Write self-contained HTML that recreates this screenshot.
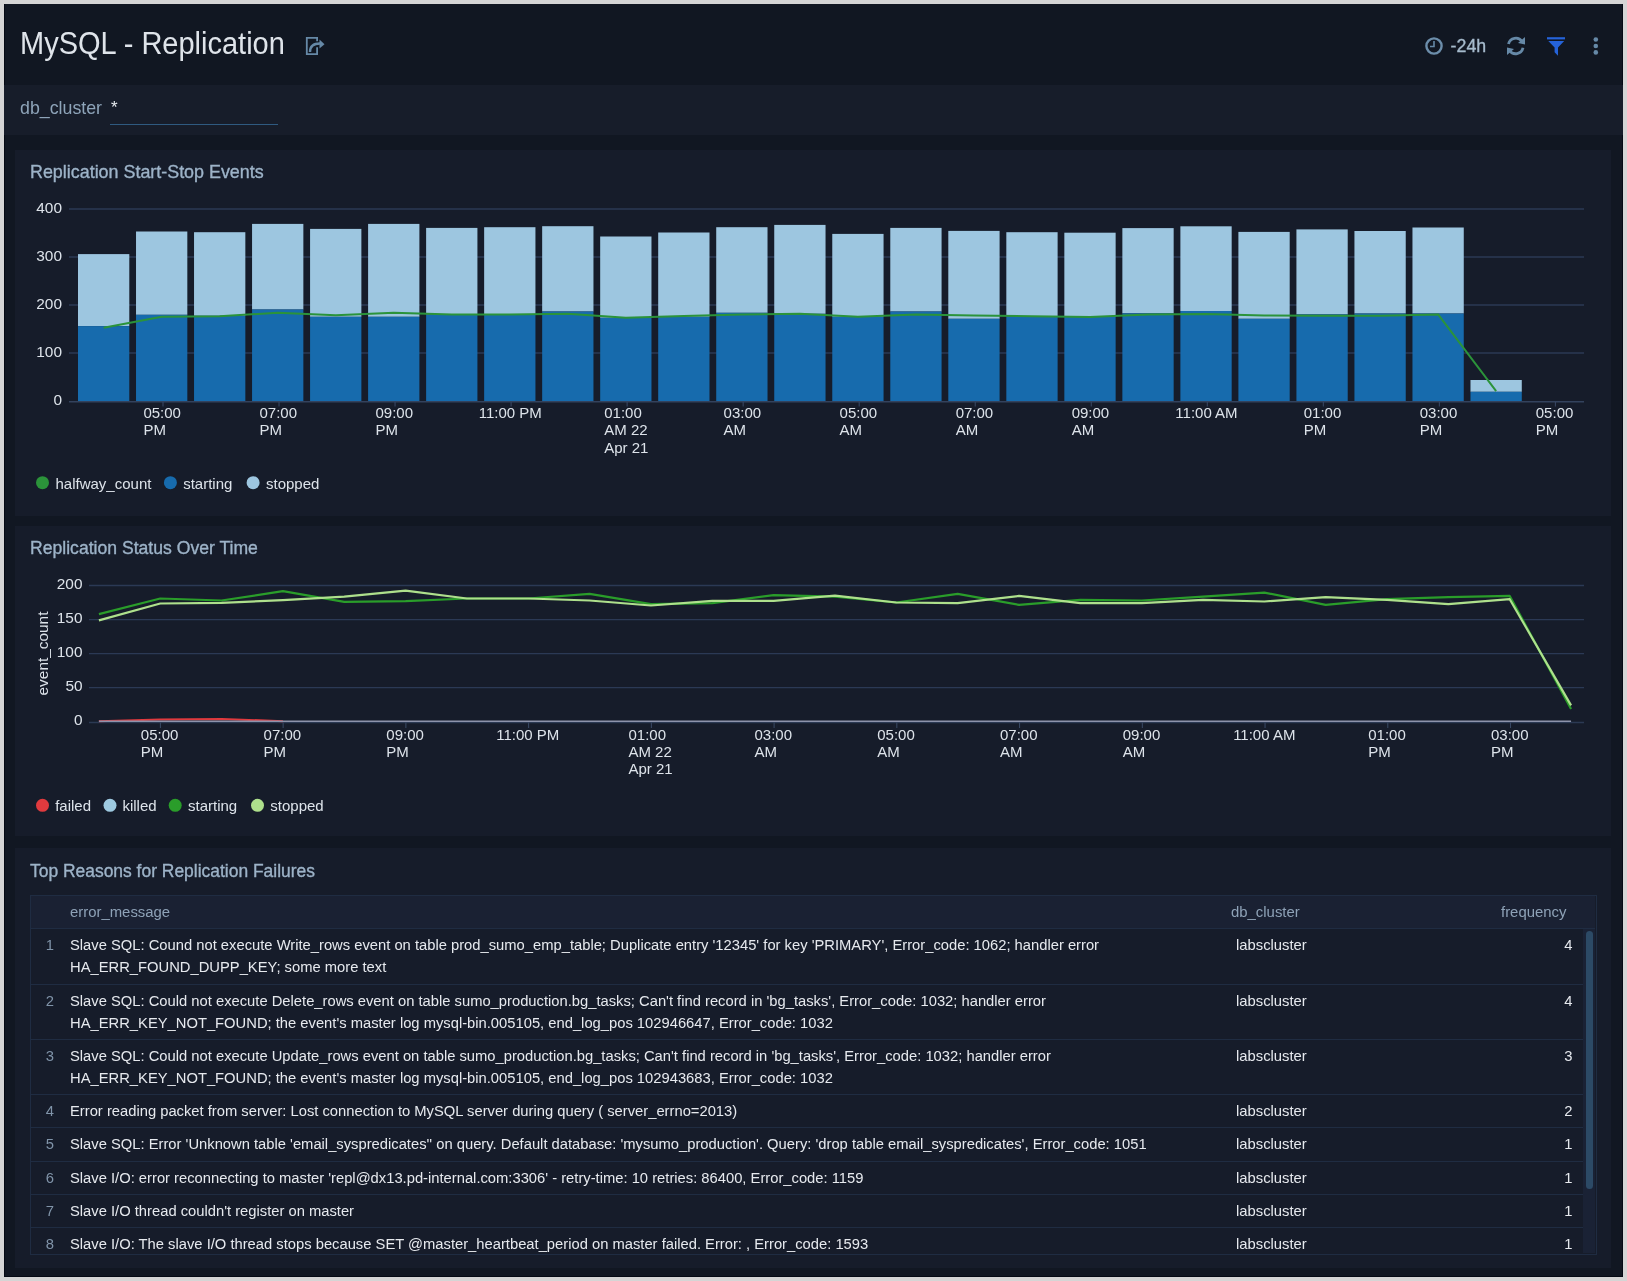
<!DOCTYPE html>
<html><head><meta charset="utf-8">
<style>
html,body{margin:0;padding:0;}
div,svg{will-change:transform;}
body{width:1627px;height:1281px;background:#d5d5d5;position:relative;overflow:hidden;font-family:"Liberation Sans", sans-serif;}
#frame{position:absolute;left:4px;top:4px;width:1619px;height:1273px;background:#111722;box-shadow:inset 1px -1px 0 #050a14, inset -1px 0 0 #050a14;}
.abs{position:absolute;}
#title{position:absolute;left:20px;top:24px;font-size:29px;color:#dfe4ea;white-space:nowrap;line-height:40px;transform:scaleY(1.07);transform-origin:0 30px;}
#filter{position:absolute;left:4px;top:85px;width:1619px;height:50px;background:#171d2a;}
.panel{position:absolute;left:15px;width:1596px;background:#161c2a;}
.ptitle{position:absolute;left:30px;font-size:17.9px;color:#9db3c8;white-space:nowrap;line-height:22px;-webkit-text-stroke:0.35px #9db3c8;}
svg text{font-family:"Liberation Sans", sans-serif;}
.ax{font-size:15px;fill:#dde3ea;}
.ay{font-size:15.4px;fill:#dde3ea;}
.lg{font-size:15px;fill:#dde3ea;}
#tbl{position:absolute;left:30px;top:895px;width:1565px;height:358px;border:1px solid #1f2c42;background:#161c2a;overflow:hidden;}
.row{position:absolute;left:30px;width:1553px;border-top:1px solid #1f2c42;box-sizing:border-box;}
.rn{position:absolute;left:30px;width:24px;text-align:right;font-size:14.8px;color:#8094a9;line-height:22px;}
.rt{position:absolute;left:70px;font-size:14.75px;color:#e6e9ee;line-height:22px;white-space:nowrap;}
.rc{position:absolute;left:1236px;font-size:14.8px;color:#e6e9ee;line-height:22px;}
.rf{position:absolute;left:1500px;width:72.5px;text-align:right;font-size:14.8px;color:#e6e9ee;line-height:22px;}
.th{position:absolute;top:901px;font-size:14.9px;color:#8ea2b7;line-height:22px;white-space:nowrap;}
</style></head><body>
<div id="frame"></div>
<div id="title">MySQL - Replication</div>
<svg class="abs" style="left:0;top:0" width="1627" height="140" viewBox="0 0 1627 140">
  <g fill="none" stroke="#6689a7" stroke-width="2">
    <path d="M317.1 41.2 V37.9 H306.8 V54.1 H317.1 V47.2" stroke-width="1.8"/>
    <path d="M310 52 C310 46 313 43.5 320 43.5" stroke-width="2.4"/>
  </g>
  <path d="M319.5 39.5 L324.5 44.3 L319.5 48.5 Z" fill="#6689a7"/>
  <circle cx="1434" cy="46" r="7.6" fill="none" stroke="#6c8eab" stroke-width="2.4"/>
  <path d="M1434 41 V46.5 H1430" fill="none" stroke="#6689a7" stroke-width="1.6"/>
  <text x="1450.6" y="52" style="font-size:17.8px" fill="#a6bbcd" stroke="#a6bbcd" stroke-width="0.35">-24h</text>
  <g fill="none" stroke="#6689a7" stroke-width="2.8">
    <path d="M1508.5 44 A7.5 7.5 0 0 1 1522 41.5"/>
    <path d="M1523 47.8 A7.5 7.5 0 0 1 1509.5 50.5"/>
  </g>
  <path d="M1525 37 L1525 44.5 L1518 43 Z" fill="#6689a7"/>
  <path d="M1507 55 L1507 47.5 L1514 49 Z" fill="#6689a7"/>
  <rect x="1547" y="37.2" width="18" height="2.2" fill="#2563d9"/>
  <path d="M1548.3 41 H1564.2 L1558 47.6 V55.8 L1554.6 52.2 V47.6 Z" fill="#2563d9"/>
  <circle cx="1595.8" cy="39.5" r="2.3" fill="#6689a7"/>
  <circle cx="1595.8" cy="46" r="2.3" fill="#6689a7"/>
  <circle cx="1595.8" cy="52.4" r="2.3" fill="#6689a7"/>
</svg>
<div id="filter"></div>
<div class="abs" style="left:20px;top:97px;font-size:17.8px;color:#8ea4b9;line-height:22px;white-space:nowrap;">db_cluster</div>
<div class="abs" style="left:111px;top:97px;font-size:17px;color:#e8ecf0;line-height:22px;">*</div>
<div class="abs" style="left:110px;top:123.5px;width:168px;height:1.3px;background:#2f5a80;"></div>
<div class="panel" style="top:150px;height:366px"></div>
<div class="panel" style="top:526px;height:310px"></div>
<div class="panel" style="top:848px;height:420px"></div>
<div class="ptitle" style="top:161px">Replication Start-Stop Events</div>
<div class="ptitle" style="top:537px;font-size:17.6px">Replication Status Over Time</div>
<div class="ptitle" style="top:860px;font-size:17.45px">Top Reasons for Replication Failures</div>
<svg class="abs" style="left:0;top:0" width="1627" height="840" viewBox="0 0 1627 840">
<line x1="69" y1="209" x2="1584" y2="209" stroke="#2b3955" stroke-width="1.3"/>
<text x="62" y="212.8" text-anchor="end" class="ay">400</text>
<line x1="69" y1="257" x2="1584" y2="257" stroke="#2b3955" stroke-width="1.3"/>
<text x="62" y="260.8" text-anchor="end" class="ay">300</text>
<line x1="69" y1="305" x2="1584" y2="305" stroke="#2b3955" stroke-width="1.3"/>
<text x="62" y="308.8" text-anchor="end" class="ay">200</text>
<line x1="69" y1="353" x2="1584" y2="353" stroke="#2b3955" stroke-width="1.3"/>
<text x="62" y="356.8" text-anchor="end" class="ay">100</text>
<line x1="69" y1="401.8" x2="1584" y2="401.8" stroke="#33425d" stroke-width="1.6"/>
<text x="62" y="404.8" text-anchor="end" class="ay">0</text>
<rect x="78.00" y="254.1" width="51.3" height="72.00" fill="#9dc6e0"/>
<rect x="78.00" y="326.1" width="51.3" height="74.90" fill="#176bad"/>
<rect x="136.02" y="231.5" width="51.3" height="83.30" fill="#9dc6e0"/>
<rect x="136.02" y="314.8" width="51.3" height="86.20" fill="#176bad"/>
<rect x="194.04" y="232.2" width="51.3" height="83.60" fill="#9dc6e0"/>
<rect x="194.04" y="315.8" width="51.3" height="85.20" fill="#176bad"/>
<rect x="252.06" y="223.9" width="51.3" height="85.60" fill="#9dc6e0"/>
<rect x="252.06" y="309.5" width="51.3" height="91.50" fill="#176bad"/>
<rect x="310.08" y="228.9" width="51.3" height="87.90" fill="#9dc6e0"/>
<rect x="310.08" y="316.8" width="51.3" height="84.20" fill="#176bad"/>
<rect x="368.10" y="223.9" width="51.3" height="92.90" fill="#9dc6e0"/>
<rect x="368.10" y="316.8" width="51.3" height="84.20" fill="#176bad"/>
<rect x="426.12" y="227.9" width="51.3" height="86.60" fill="#9dc6e0"/>
<rect x="426.12" y="314.5" width="51.3" height="86.50" fill="#176bad"/>
<rect x="484.14" y="227.2" width="51.3" height="87.30" fill="#9dc6e0"/>
<rect x="484.14" y="314.5" width="51.3" height="86.50" fill="#176bad"/>
<rect x="542.16" y="226.2" width="51.3" height="85.30" fill="#9dc6e0"/>
<rect x="542.16" y="311.5" width="51.3" height="89.50" fill="#176bad"/>
<rect x="600.18" y="236.5" width="51.3" height="81.30" fill="#9dc6e0"/>
<rect x="600.18" y="317.8" width="51.3" height="83.20" fill="#176bad"/>
<rect x="658.20" y="232.5" width="51.3" height="84.30" fill="#9dc6e0"/>
<rect x="658.20" y="316.8" width="51.3" height="84.20" fill="#176bad"/>
<rect x="716.22" y="227.2" width="51.3" height="85.60" fill="#9dc6e0"/>
<rect x="716.22" y="312.8" width="51.3" height="88.20" fill="#176bad"/>
<rect x="774.24" y="224.9" width="51.3" height="88.90" fill="#9dc6e0"/>
<rect x="774.24" y="313.8" width="51.3" height="87.20" fill="#176bad"/>
<rect x="832.26" y="233.9" width="51.3" height="82.90" fill="#9dc6e0"/>
<rect x="832.26" y="316.8" width="51.3" height="84.20" fill="#176bad"/>
<rect x="890.28" y="227.9" width="51.3" height="83.60" fill="#9dc6e0"/>
<rect x="890.28" y="311.5" width="51.3" height="89.50" fill="#176bad"/>
<rect x="948.30" y="230.9" width="51.3" height="87.90" fill="#9dc6e0"/>
<rect x="948.30" y="318.8" width="51.3" height="82.20" fill="#176bad"/>
<rect x="1006.32" y="232.2" width="51.3" height="84.00" fill="#9dc6e0"/>
<rect x="1006.32" y="316.2" width="51.3" height="84.80" fill="#176bad"/>
<rect x="1064.34" y="232.7" width="51.3" height="84.20" fill="#9dc6e0"/>
<rect x="1064.34" y="316.9" width="51.3" height="84.10" fill="#176bad"/>
<rect x="1122.36" y="228.1" width="51.3" height="85.20" fill="#9dc6e0"/>
<rect x="1122.36" y="313.3" width="51.3" height="87.70" fill="#176bad"/>
<rect x="1180.38" y="226.3" width="51.3" height="84.70" fill="#9dc6e0"/>
<rect x="1180.38" y="311" width="51.3" height="90.00" fill="#176bad"/>
<rect x="1238.40" y="231.9" width="51.3" height="86.90" fill="#9dc6e0"/>
<rect x="1238.40" y="318.8" width="51.3" height="82.20" fill="#176bad"/>
<rect x="1296.42" y="229.4" width="51.3" height="85.00" fill="#9dc6e0"/>
<rect x="1296.42" y="314.4" width="51.3" height="86.60" fill="#176bad"/>
<rect x="1354.44" y="231" width="51.3" height="82.50" fill="#9dc6e0"/>
<rect x="1354.44" y="313.5" width="51.3" height="87.50" fill="#176bad"/>
<rect x="1412.46" y="227.5" width="51.3" height="86.00" fill="#9dc6e0"/>
<rect x="1412.46" y="313.5" width="51.3" height="87.50" fill="#176bad"/>
<rect x="1470.48" y="380" width="51.3" height="11.80" fill="#9dc6e0"/>
<rect x="1470.48" y="391.8" width="51.3" height="9.20" fill="#176bad"/>
<polyline points="103.65,327.8 161.67,316.8 219.69,316.2 277.71,312.8 335.73,315.2 393.75,312.8 451.77,314.5 509.79,314.5 567.81,313.8 625.83,317.8 683.85,316 741.87,314.5 799.89,313.8 857.91,316.8 915.93,314.5 973.95,315.5 1031.97,316.2 1089.99,317 1148.01,314.5 1206.03,313.9 1264.05,315.5 1322.07,315.7 1380.09,315.7 1438.11,314.4 1496.13,391.1" fill="none" stroke="#2b933a" stroke-width="2" stroke-linejoin="round"/>
<line x1="163.00" y1="402" x2="163.00" y2="406.5" stroke="#3b4b68" stroke-width="1"/>
<text x="143.43" y="417.80" class="ax">05:00</text>
<text x="143.43" y="435.20" class="ax">PM</text>
<line x1="279.03" y1="402" x2="279.03" y2="406.5" stroke="#3b4b68" stroke-width="1"/>
<text x="259.46" y="417.80" class="ax">07:00</text>
<text x="259.46" y="435.20" class="ax">PM</text>
<line x1="395.06" y1="402" x2="395.06" y2="406.5" stroke="#3b4b68" stroke-width="1"/>
<text x="375.49" y="417.80" class="ax">09:00</text>
<text x="375.49" y="435.20" class="ax">PM</text>
<line x1="511.09" y1="402" x2="511.09" y2="406.5" stroke="#3b4b68" stroke-width="1"/>
<text x="478.74" y="417.80" class="ax">11:00 PM</text>
<line x1="627.12" y1="402" x2="627.12" y2="406.5" stroke="#3b4b68" stroke-width="1"/>
<text x="604.22" y="417.80" class="ax">01:00</text>
<text x="604.22" y="435.20" class="ax">AM 22</text>
<text x="604.22" y="452.60" class="ax">Apr 21</text>
<line x1="743.15" y1="402" x2="743.15" y2="406.5" stroke="#3b4b68" stroke-width="1"/>
<text x="723.58" y="417.80" class="ax">03:00</text>
<text x="723.58" y="435.20" class="ax">AM</text>
<line x1="859.18" y1="402" x2="859.18" y2="406.5" stroke="#3b4b68" stroke-width="1"/>
<text x="839.61" y="417.80" class="ax">05:00</text>
<text x="839.61" y="435.20" class="ax">AM</text>
<line x1="975.21" y1="402" x2="975.21" y2="406.5" stroke="#3b4b68" stroke-width="1"/>
<text x="955.64" y="417.80" class="ax">07:00</text>
<text x="955.64" y="435.20" class="ax">AM</text>
<line x1="1091.24" y1="402" x2="1091.24" y2="406.5" stroke="#3b4b68" stroke-width="1"/>
<text x="1071.67" y="417.80" class="ax">09:00</text>
<text x="1071.67" y="435.20" class="ax">AM</text>
<line x1="1207.27" y1="402" x2="1207.27" y2="406.5" stroke="#3b4b68" stroke-width="1"/>
<text x="1175.34" y="417.80" class="ax">11:00 AM</text>
<line x1="1323.30" y1="402" x2="1323.30" y2="406.5" stroke="#3b4b68" stroke-width="1"/>
<text x="1303.73" y="417.80" class="ax">01:00</text>
<text x="1303.73" y="435.20" class="ax">PM</text>
<line x1="1439.33" y1="402" x2="1439.33" y2="406.5" stroke="#3b4b68" stroke-width="1"/>
<text x="1419.76" y="417.80" class="ax">03:00</text>
<text x="1419.76" y="435.20" class="ax">PM</text>
<line x1="1555.36" y1="402" x2="1555.36" y2="406.5" stroke="#3b4b68" stroke-width="1"/>
<text x="1535.79" y="417.80" class="ax">05:00</text>
<text x="1535.79" y="435.20" class="ax">PM</text>
<circle cx="42.5" cy="482.7" r="6.5" fill="#2b933a"/>
<text x="55.5" y="488.7" class="lg">halfway_count</text>
<circle cx="170.4" cy="482.7" r="6.5" fill="#176bad"/>
<text x="183.2" y="488.7" class="lg">starting</text>
<circle cx="253.1" cy="482.7" r="6.5" fill="#9dc6e0"/>
<text x="266" y="488.7" class="lg">stopped</text>
<line x1="89" y1="585.5" x2="1584" y2="585.5" stroke="#2b3955" stroke-width="1.3"/>
<text x="82.5" y="589.1" text-anchor="end" class="ay">200</text>
<line x1="89" y1="619.6" x2="1584" y2="619.6" stroke="#2b3955" stroke-width="1.3"/>
<text x="82.5" y="623.2" text-anchor="end" class="ay">150</text>
<line x1="89" y1="653.6" x2="1584" y2="653.6" stroke="#2b3955" stroke-width="1.3"/>
<text x="82.5" y="657.2" text-anchor="end" class="ay">100</text>
<line x1="89" y1="687.7" x2="1584" y2="687.7" stroke="#2b3955" stroke-width="1.3"/>
<text x="82.5" y="691.3000000000001" text-anchor="end" class="ay">50</text>
<line x1="89" y1="722.5" x2="1584" y2="722.5" stroke="#2b3953" stroke-width="1.6"/>
<text x="82.5" y="725.3000000000001" text-anchor="end" class="ay">0</text>
<polyline points="98.90,721.2 160.24,719.6 221.58,718.9 282.92,721.2" fill="none" stroke="#e03a3e" stroke-width="2" stroke-linejoin="round"/>
<polyline points="98.90,721.2 160.24,721.2 221.58,721.2 282.92,721.2 344.26,721.2 405.60,721.2 466.94,721.2 528.28,721.2 589.62,721.2 650.96,721.2 712.30,721.2 773.64,721.2 834.98,721.2 896.32,721.2 957.66,721.2 1019.00,721.2 1080.34,721.2 1141.68,721.2 1203.02,721.2 1264.36,721.2 1325.70,721.2 1387.04,721.2 1448.38,721.2 1509.72,721.2 1571.06,721.2" fill="none" stroke="#8d93ab" stroke-width="1.4" stroke-linejoin="round"/>
<polyline points="98.90,614.1 160.24,598.5 221.58,600.5 282.92,591.2 344.26,601.9 405.60,601.2 466.94,598.5 528.28,598.5 589.62,593.9 650.96,604.2 712.30,603.2 773.64,595.2 834.98,596.6 896.32,602.5 957.66,593.9 1019.00,604.8 1080.34,599.9 1141.68,600.5 1203.02,596.6 1264.36,592.6 1325.70,604.8 1387.04,599.2 1448.38,597.2 1509.72,595.9 1571.06,709.0" fill="none" stroke="#2a9d2a" stroke-width="2.2" stroke-linejoin="round"/>
<polyline points="98.90,620.4 160.24,603.5 221.58,602.9 282.92,600.2 344.26,596.6 405.60,590.6 466.94,598.5 528.28,598.5 589.62,600.5 650.96,605.5 712.30,600.9 773.64,600.9 834.98,595.6 896.32,602.5 957.66,603.2 1019.00,595.9 1080.34,603.2 1141.68,603.2 1203.02,599.9 1264.36,601.5 1325.70,597.2 1387.04,599.9 1448.38,604.2 1509.72,599.2 1571.06,705.4" fill="none" stroke="#aee08c" stroke-width="2.2" stroke-linejoin="round"/>
<line x1="160.40" y1="722.5" x2="160.40" y2="728" stroke="#3a4a66" stroke-width="1"/>
<text x="140.83" y="740.30" class="ax">05:00</text>
<text x="140.83" y="757.30" class="ax">PM</text>
<line x1="283.14" y1="722.5" x2="283.14" y2="728" stroke="#3a4a66" stroke-width="1"/>
<text x="263.57" y="740.30" class="ax">07:00</text>
<text x="263.57" y="757.30" class="ax">PM</text>
<line x1="405.88" y1="722.5" x2="405.88" y2="728" stroke="#3a4a66" stroke-width="1"/>
<text x="386.31" y="740.30" class="ax">09:00</text>
<text x="386.31" y="757.30" class="ax">PM</text>
<line x1="528.62" y1="722.5" x2="528.62" y2="728" stroke="#3a4a66" stroke-width="1"/>
<text x="496.27" y="740.30" class="ax">11:00 PM</text>
<line x1="651.36" y1="722.5" x2="651.36" y2="728" stroke="#3a4a66" stroke-width="1"/>
<text x="628.46" y="740.30" class="ax">01:00</text>
<text x="628.46" y="757.30" class="ax">AM 22</text>
<text x="628.46" y="774.30" class="ax">Apr 21</text>
<line x1="774.10" y1="722.5" x2="774.10" y2="728" stroke="#3a4a66" stroke-width="1"/>
<text x="754.53" y="740.30" class="ax">03:00</text>
<text x="754.53" y="757.30" class="ax">AM</text>
<line x1="896.84" y1="722.5" x2="896.84" y2="728" stroke="#3a4a66" stroke-width="1"/>
<text x="877.27" y="740.30" class="ax">05:00</text>
<text x="877.27" y="757.30" class="ax">AM</text>
<line x1="1019.58" y1="722.5" x2="1019.58" y2="728" stroke="#3a4a66" stroke-width="1"/>
<text x="1000.01" y="740.30" class="ax">07:00</text>
<text x="1000.01" y="757.30" class="ax">AM</text>
<line x1="1142.32" y1="722.5" x2="1142.32" y2="728" stroke="#3a4a66" stroke-width="1"/>
<text x="1122.75" y="740.30" class="ax">09:00</text>
<text x="1122.75" y="757.30" class="ax">AM</text>
<line x1="1265.06" y1="722.5" x2="1265.06" y2="728" stroke="#3a4a66" stroke-width="1"/>
<text x="1233.13" y="740.30" class="ax">11:00 AM</text>
<line x1="1387.80" y1="722.5" x2="1387.80" y2="728" stroke="#3a4a66" stroke-width="1"/>
<text x="1368.23" y="740.30" class="ax">01:00</text>
<text x="1368.23" y="757.30" class="ax">PM</text>
<line x1="1510.54" y1="722.5" x2="1510.54" y2="728" stroke="#3a4a66" stroke-width="1"/>
<text x="1490.97" y="740.30" class="ax">03:00</text>
<text x="1490.97" y="757.30" class="ax">PM</text>
<text transform="translate(47.8,653.5) rotate(-90)" text-anchor="middle" class="ay">event_count</text>
<circle cx="42.5" cy="805.3" r="6.5" fill="#e03a3e"/>
<text x="55.2" y="811.3" class="lg">failed</text>
<circle cx="110" cy="805.3" r="6.5" fill="#9ecae1"/>
<text x="122.4" y="811.3" class="lg">killed</text>
<circle cx="175.2" cy="805.3" r="6.5" fill="#2a9d2a"/>
<text x="188" y="811.3" class="lg">starting</text>
<circle cx="257.5" cy="805.3" r="6.5" fill="#aee08c"/>
<text x="270.3" y="811.3" class="lg">stopped</text>
</svg>
<div id="tbl"></div>
<div class="abs" style="left:31px;top:896px;width:1564px;height:32px;background:#1a2133;border-bottom:1px solid #1f2c42;"></div>
<div class="th" style="left:70px">error_message</div>
<div class="th" style="left:1231px">db_cluster</div>
<div class="th" style="left:1500.5px">frequency</div>
<div class="row" style="top:928px;height:56px"></div>
<div class="rn" style="top:934px">1</div>
<div class="rt" style="top:934px">Slave SQL: Cound not execute Write_rows event on table prod_sumo_emp_table; Duplicate entry '12345' for key 'PRIMARY', Error_code: 1062; handler error</div>
<div class="rt" style="top:956px">HA_ERR_FOUND_DUPP_KEY; some more text</div>
<div class="rc" style="top:934px">labscluster</div>
<div class="rf" style="top:934px">4</div>
<div class="row" style="top:984px;height:55px"></div>
<div class="rn" style="top:990px">2</div>
<div class="rt" style="top:990px">Slave SQL: Could not execute Delete_rows event on table sumo_production.bg_tasks; Can't find record in 'bg_tasks', Error_code: 1032; handler error</div>
<div class="rt" style="top:1012px">HA_ERR_KEY_NOT_FOUND; the event's master log mysql-bin.005105, end_log_pos 102946647, Error_code: 1032</div>
<div class="rc" style="top:990px">labscluster</div>
<div class="rf" style="top:990px">4</div>
<div class="row" style="top:1039px;height:55px"></div>
<div class="rn" style="top:1045px">3</div>
<div class="rt" style="top:1045px">Slave SQL: Could not execute Update_rows event on table sumo_production.bg_tasks; Can't find record in 'bg_tasks', Error_code: 1032; handler error</div>
<div class="rt" style="top:1067px">HA_ERR_KEY_NOT_FOUND; the event's master log mysql-bin.005105, end_log_pos 102943683, Error_code: 1032</div>
<div class="rc" style="top:1045px">labscluster</div>
<div class="rf" style="top:1045px">3</div>
<div class="row" style="top:1094px;height:33px"></div>
<div class="rn" style="top:1100px">4</div>
<div class="rt" style="top:1100px">Error reading packet from server: Lost connection to MySQL server during query ( server_errno=2013)</div>
<div class="rc" style="top:1100px">labscluster</div>
<div class="rf" style="top:1100px">2</div>
<div class="row" style="top:1127px;height:34px"></div>
<div class="rn" style="top:1133px">5</div>
<div class="rt" style="top:1133px">Slave SQL: Error 'Unknown table 'email_syspredicates'' on query. Default database: 'mysumo_production'. Query: 'drop table email_syspredicates', Error_code: 1051</div>
<div class="rc" style="top:1133px">labscluster</div>
<div class="rf" style="top:1133px">1</div>
<div class="row" style="top:1161px;height:33px"></div>
<div class="rn" style="top:1167px">6</div>
<div class="rt" style="top:1167px">Slave I/O: error reconnecting to master 'repl@dx13.pd-internal.com:3306' - retry-time: 10 retries: 86400, Error_code: 1159</div>
<div class="rc" style="top:1167px">labscluster</div>
<div class="rf" style="top:1167px">1</div>
<div class="row" style="top:1194px;height:33px"></div>
<div class="rn" style="top:1200px">7</div>
<div class="rt" style="top:1200px">Slave I/O thread couldn't register on master</div>
<div class="rc" style="top:1200px">labscluster</div>
<div class="rf" style="top:1200px">1</div>
<div class="row" style="top:1227px;height:26px"></div>
<div class="rn" style="top:1233px">8</div>
<div class="rt" style="top:1233px">Slave I/O: The slave I/O thread stops because SET @master_heartbeat_period on master failed. Error: , Error_code: 1593</div>
<div class="rc" style="top:1233px">labscluster</div>
<div class="rf" style="top:1233px">1</div>
<div class="abs" style="left:1583px;top:929px;width:12px;height:324px;background:#1a2235;"></div>
<div class="abs" style="left:1586px;top:931px;width:7px;height:258px;background:#2c4a66;border-radius:4px;"></div>
</body></html>
